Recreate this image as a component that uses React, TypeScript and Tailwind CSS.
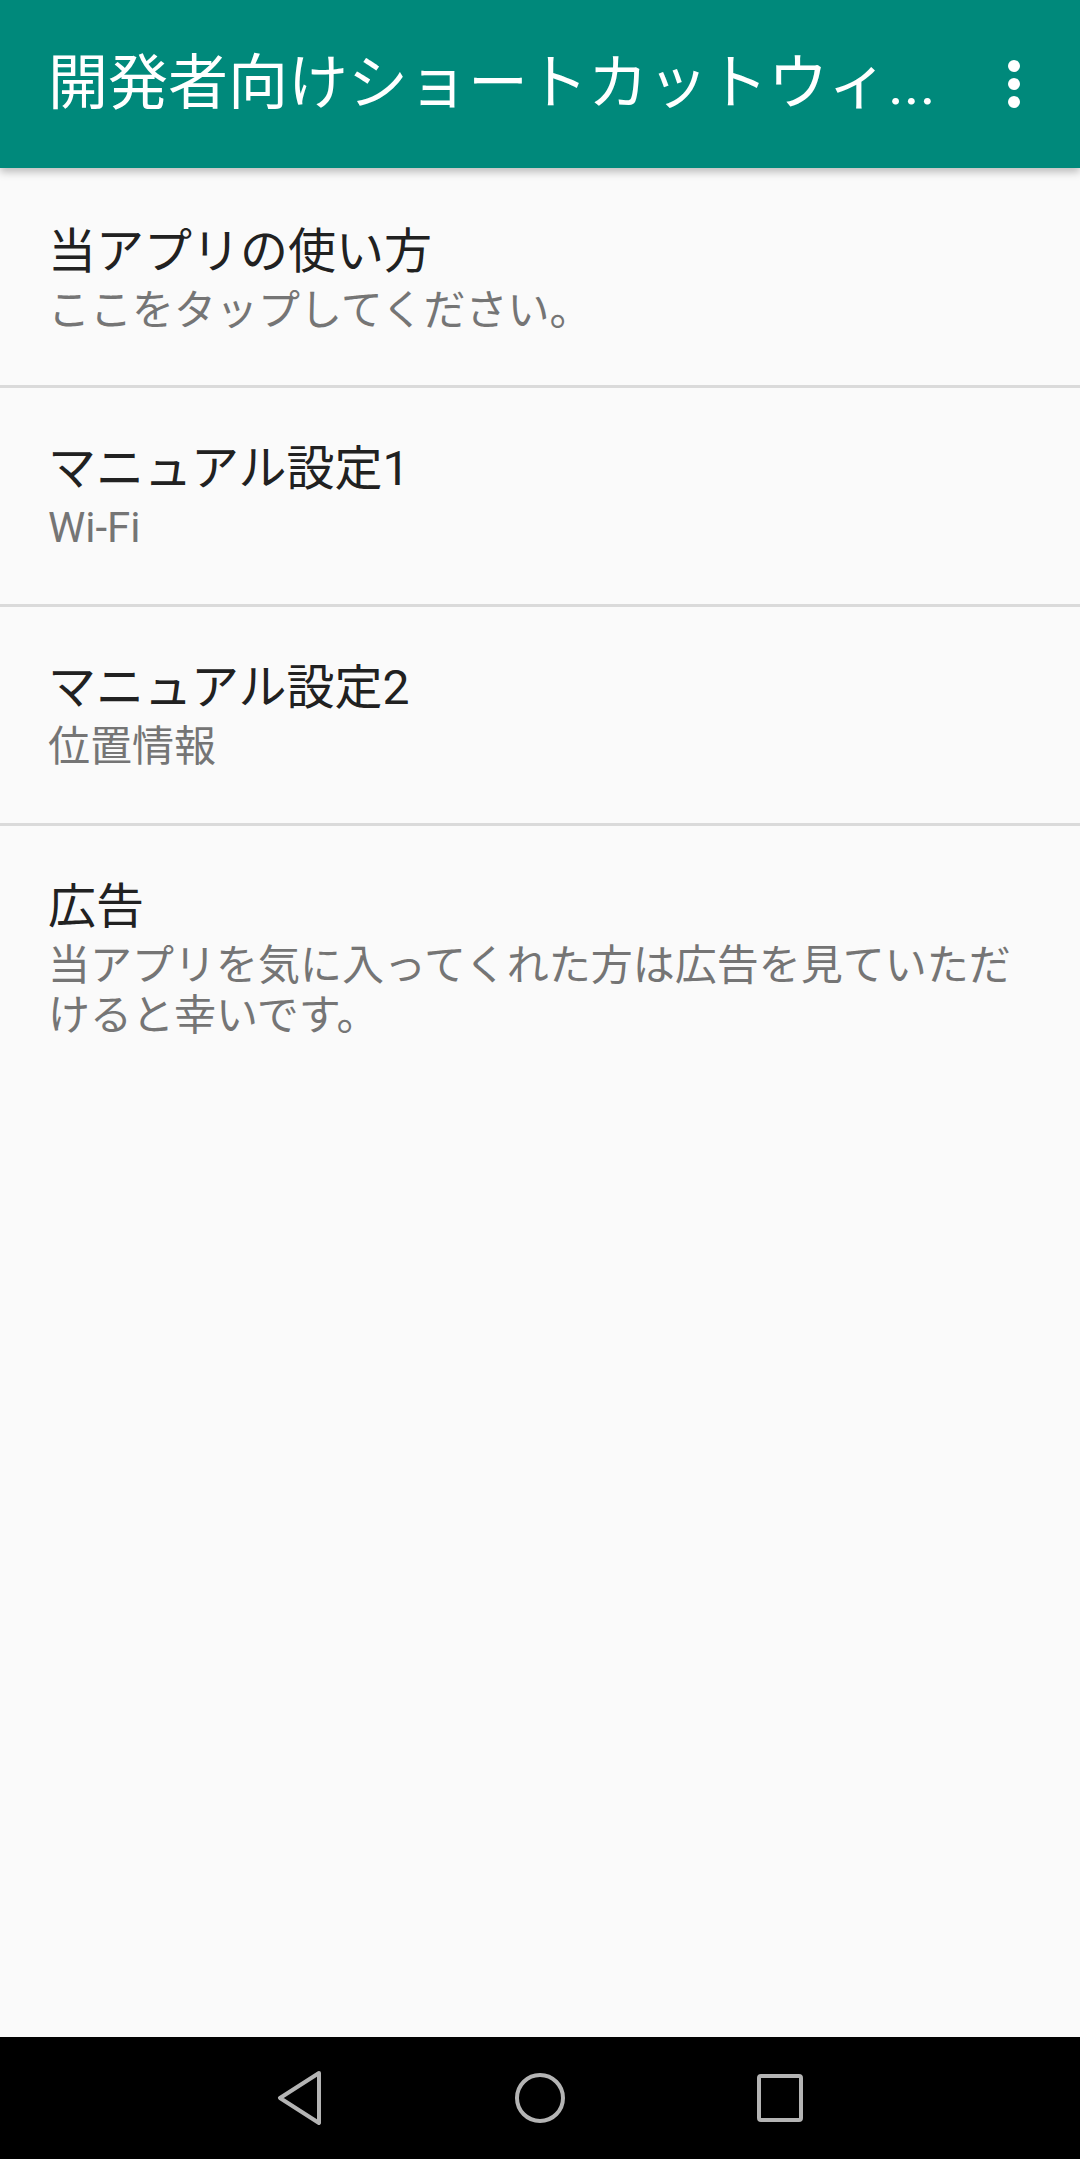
import React from 'react';

const items = [
    { title: '当アプリの使い方', summary: 'ここをタップしてください。' },
    { title: 'マニュアル設定1', summary: 'Wi-Fi' },
    { title: 'マニュアル設定2', summary: '位置情報' },
    { title: '広告', summary: '当アプリを気に入ってくれた方は広告を見ていただけると幸いです。' },
];

function MoreIcon() {
    return (
        <svg width="72" height="72" viewBox="0 0 24 24" fill="white">
            <circle cx="12" cy="6" r="2" />
            <circle cx="12" cy="12" r="2" />
            <circle cx="12" cy="18" r="2" />
        </svg>
    );
}

export default function App() {
    return (
        <div className="h-screen flex flex-col bg-[#fafafa] font-['Roboto','Noto_Sans_CJK_JP',sans-serif] overflow-hidden">
            {/* Toolbar */}
            <header className="relative z-10 h-[168px] shrink-0 bg-[#00897b] flex items-center pl-[48px] pr-[30px] shadow-[0_4px_8px_rgba(0,0,0,0.25)]">
                <h1 className="flex-1 text-white text-[60px] leading-none font-normal whitespace-nowrap">
                    開発者向けショートカットウィ...
                </h1>
                <button className="w-[72px] h-[72px] flex items-center justify-center" aria-label="More options">
                    <MoreIcon />
                </button>
            </header>

            {/* Preference list */}
            <main className="flex-1">
                {items.map((item, i) => (
                    <div key={i} className={i < items.length - 1 ? 'border-b-[3px] border-[#dadada]' : ''}>
                        <div className={i === 0 ? 'px-[48px] pt-[53px] pb-[49px]' : 'px-[48px] pt-[50px] pb-[51px]'}>
                            <div className="text-[48px] leading-[62px] text-[#212121]">{item.title}</div>
                            <div className="mt-[3px] text-[42px] leading-[50px] text-[#757575]">{item.summary}</div>
                        </div>
                    </div>
                ))}
            </main>

            {/* Navigation bar */}
            <nav className="h-[122px] shrink-0 bg-black flex items-center justify-center">
                <div className="w-[240px] flex justify-center">
                    <svg width="46" height="54" viewBox="0 0 46 54" fill="none" stroke="#b4b4b4" strokeWidth="4" strokeLinejoin="round">
                        <path d="M42 2 L3 27 L42 52 Z" />
                    </svg>
                </div>
                <div className="w-[240px] flex justify-center">
                    <svg width="54" height="54" viewBox="0 0 54 54" fill="none" stroke="#b4b4b4" strokeWidth="4">
                        <circle cx="27" cy="27" r="23" />
                    </svg>
                </div>
                <div className="w-[240px] flex justify-center">
                    <svg width="48" height="50" viewBox="0 0 48 50" fill="none" stroke="#b4b4b4" strokeWidth="4" strokeLinejoin="round">
                        <rect x="3" y="3" width="42" height="44" rx="2" />
                    </svg>
                </div>
            </nav>
        </div>
    );
}
